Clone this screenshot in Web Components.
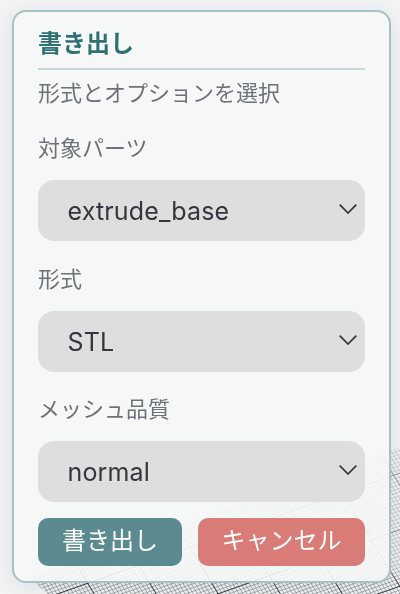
<!DOCTYPE html>
<html lang="ja">
<head>
<meta charset="utf-8">
<title>書き出し</title>
<style>
	html, body { margin: 0; height: 100%; overflow: hidden; background: #f3f4f6; }
	body { font-family: Inter, "Noto Sans CJK JP", sans-serif; }
</style>
</head>
<body>
<grid-plane></grid-plane>
<export-dialog>
	<span slot="title">書き出し</span>
	<span slot="hint">形式とオプションを選択</span>
	<pick-field label="対象パーツ" gap="0">extrude_base</pick-field>
	<pick-field label="形式" gap="23">STL</pick-field>
	<pick-field label="メッシュ品質" gap="22">normal</pick-field>
	<action-button slot="actions" tone="primary">書き出し</action-button>
	<action-button slot="actions" tone="danger">キャンセル</action-button>
</export-dialog>

<script>
class GridPlane extends HTMLElement {
	constructor() {
		super();
		this.attachShadow({ mode: 'open' });
		this.shadowRoot.innerHTML = `
			<style>
				:host { position: fixed; inset: 0; display: block; }
				svg { display: block; width: 100%; height: 100%; }
			</style>
			<svg viewBox="0 0 400 594" xmlns="http://www.w3.org/2000/svg">
				<defs>
					<pattern id="minor" width="1" height="1" patternUnits="userSpaceOnUse" patternTransform="matrix(3.4 -1.2 1.9 3.1 87 583)">
						<path d="M1 0H0V1" fill="none" stroke="#5f666b" stroke-width=".24"/>
					</pattern>
					<pattern id="major" width="1" height="1" patternUnits="userSpaceOnUse" patternTransform="matrix(51 -18 28.5 46.5 87 583)">
						<path d="M1 0H0V1" fill="none" stroke="#1c2024" stroke-width=".026"/>
					</pattern>
					<linearGradient id="fade" gradientUnits="userSpaceOnUse" x1="0" y1="440" x2="0" y2="594">
						<stop offset="0" stop-color="#fff" stop-opacity=".45"/>
						<stop offset=".8" stop-color="#fff" stop-opacity=".6"/>
						<stop offset=".93" stop-color="#fff" stop-opacity="1"/>
					</linearGradient>
					<mask id="far"><rect width="400" height="594" fill="url(#fade)"/></mask>
				</defs>
				<g mask="url(#far)">
					<polygon points="30,577 400,447 400,594 47,594" fill="url(#minor)"/>
					<polygon points="30,577 400,447 400,594 47,594" fill="url(#major)"/>
				</g>
			</svg>`;
	}
}
customElements.define('grid-plane', GridPlane);

const exportDialogTemplate = document.createElement('template');
exportDialogTemplate.innerHTML = `
	<style>
		:host { display: block; position: relative; width: 379px; margin: 10px 0 0 12px; box-sizing: border-box;
			height: 573px; padding: 16px 24px 0; border: 2px solid #a6c3c4; border-radius: 14px;
			background: rgba(246, 248, 248, .88); box-shadow: 0 4px 24px rgba(30, 40, 50, .1); }
		.title { font-size: 24px; line-height: 32px; font-weight: 700; color: #2f7075; padding-bottom: 8px;
			border-bottom: 2px solid #c5d9da; }
		.hint { font-size: 22px; line-height: 30px; color: #6c7277; margin: 8px 0 24.5px; }
		.actions { display: flex; gap: 16px; margin-top: 16.5px; }
	</style>
	<div class="title"><slot name="title"></slot></div>
	<div class="hint"><slot name="hint"></slot></div>
	<slot></slot>
	<div class="actions"><slot name="actions"></slot></div>
`;
class ExportDialog extends HTMLElement {
	constructor() {
		super();
		this.attachShadow({ mode: 'open' });
		this.shadowRoot.appendChild(exportDialogTemplate.content.cloneNode(true));
	}
}
customElements.define('export-dialog', ExportDialog);

class PickField extends HTMLElement {
	constructor() {
		super();
		this.attachShadow({ mode: 'open' });
		this.shadowRoot.innerHTML = `
			<style>
				:host { display: block; margin-top: ${this.getAttribute('gap')}px; }
				.label { font-size: 22px; line-height: 30px; color: #6c7277; margin-bottom: 17.5px; }
				.box { display: flex; align-items: center; justify-content: space-between; box-sizing: border-box;
					height: 60.5px; padding: 1px 8px 0 29.5px; border-radius: 16px; background: #dedede;
					font-size: 25px; letter-spacing: .15px; color: #33373d; }
				svg { width: 18px; height: 10px; margin-top: -3px; }
			</style>
			<div class="label">${this.getAttribute('label')}</div>
			<div class="box" role="combobox">
				<span><slot></slot></span>
				<svg viewBox="0 0 18 10"><path d="M.7 .7L9 9l8.3-8.3" fill="none" stroke="#33373d" stroke-width="1.7"/></svg>
			</div>`;
	}
}
customElements.define('pick-field', PickField);

class ActionButton extends HTMLElement {
	constructor() {
		super();
		this.attachShadow({ mode: 'open' });
		const color = this.getAttribute('tone') === 'danger' ? 'rgba(216, 118, 113, .95)' : 'rgba(83, 133, 139, .95)';
		this.shadowRoot.innerHTML = `
			<style>
				:host { display: block; height: 48px; border-radius: 10px;
					background: ${color}; color: #fff; font-size: 24px; line-height: 46px; text-align: center; white-space: nowrap; }
				:host([tone="primary"]) { flex: 144 1 0; }
				:host([tone="danger"]) { flex: 167 1 0; }
			</style>
			<slot></slot>`;
	}
}
customElements.define('action-button', ActionButton);
</script>
</body>
</html>
